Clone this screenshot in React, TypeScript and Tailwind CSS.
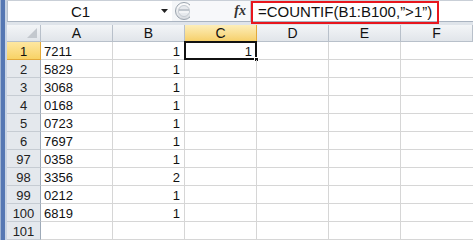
import React from "react";

const rows: [string, string, string][] = [
  ["1", "7211", "1"],
  ["2", "5829", "1"],
  ["3", "3068", "1"],
  ["4", "0168", "1"],
  ["5", "0723", "1"],
  ["6", "7697", "1"],
  ["97", "0358", "1"],
  ["98", "3356", "2"],
  ["99", "0212", "1"],
  ["100", "6819", "1"],
  ["101", "", ""],
];

const cols = ["A", "B", "C", "D", "E", "F"];

export default function App() {
  return (
    <div className="relative w-[473px] h-[240px] overflow-hidden flex bg-white font-['Liberation_Sans',Arial,sans-serif] text-[#111]">
      {/* left blue strip */}
      <div className="flex h-full">
        <div className="w-[1px] bg-[#9fb3d2]" />
        <div className="w-[4px] bg-[#5577b3]" />
        <div className="w-[2px] bg-[#c9d4e4]" />
      </div>

      <div className="flex flex-col flex-1">
        {/* formula bar */}
        <div className="flex h-[21px] bg-white border-t border-[#c9cfd7]">
          <div className="flex w-[165px] border-l border-[#b9c2cd]">
            <div className="w-[146px] flex items-center justify-center text-[15px] leading-none pt-[1px]">C1</div>
            <div className="w-[19px] flex items-center pl-[8px]">
              <svg width="7" height="4" viewBox="0 0 7 4">
                <polygon points="0,0 7,0 3.5,4" fill="#222" />
              </svg>
            </div>
          </div>
          <div className="w-[18px] flex items-center bg-[#f4f6f8]">
            <svg width="18" height="20" viewBox="0 0 18 20">
              <defs>
                <linearGradient id="sg" x1="0" y1="0" x2="0" y2="1">
                  <stop offset="0" stopColor="#ffffff" />
                  <stop offset="1" stopColor="#d6dadf" />
                </linearGradient>
              </defs>
              <circle cx="12" cy="10" r="8.5" fill="url(#sg)" stroke="#9aa3ad" strokeWidth="1" />
              <circle cx="12" cy="10" r="5.5" fill="#e7eaee" stroke="#c4cad1" strokeWidth="1" />
              <line x1="7" y1="9" x2="17" y2="9" stroke="#9aa3ad" strokeWidth="1" />
              <line x1="7" y1="11" x2="17" y2="11" stroke="#ffffff" strokeWidth="1" />
            </svg>
          </div>
          <div className="w-[60px] flex items-center justify-end pr-[4px] bg-[#f7f8fa]">
            <span className="font-['Liberation_Serif',serif] italic font-bold text-[14px] leading-none text-[#333]">fx</span>
          </div>
          <div className="flex-1 flex items-center pl-[7px] border-l border-[#c2c8d0] text-[15px] leading-none pt-[1px] whitespace-nowrap">
            =COUNTIF(B1:B100,”&gt;1”)
          </div>
        </div>
        <div className="h-[4px] bg-[#dfe4ea] border-t border-[#aab4c1]" />

        {/* header row */}
        <div className="flex h-[17px]">
          <div className="w-[34px] relative bg-gradient-to-b from-[#f3f5f7] to-[#e1e5ea] border-r border-b border-[#b8c0ca]">
            <svg className="absolute right-[3px] bottom-[3px]" width="10" height="10" viewBox="0 0 10 10">
              <polygon points="10,0 10,10 0,10" fill="#c3c8ce" />
            </svg>
          </div>
          {cols.map((c) =>
            c === "C" ? (
              <div
                key={c}
                className="w-[72px] flex items-center justify-center text-[14px] leading-none bg-gradient-to-b from-[#fdeeb8] to-[#f6d06a] border-r border-b border-[#e2a93a]"
              >
                {c}
              </div>
            ) : (
              <div
                key={c}
                className="w-[72px] flex items-center justify-center text-[14px] leading-none bg-gradient-to-b from-[#f3f5f7] to-[#e1e5ea] border-r border-b border-[#b8c0ca]"
              >
                {c}
              </div>
            )
          )}
        </div>

        {/* data rows */}
        {rows.map(([n, a, b], i) => (
          <div key={n} className="flex h-[18px] text-[13px] leading-none">
            {i === 0 ? (
              <div className="w-[34px] flex items-center justify-center pt-[2px] bg-gradient-to-b from-[#fee7a0] to-[#f8d264] border-r border-b border-[#e2a93a]">
                {n}
              </div>
            ) : (
              <div className="w-[34px] flex items-center justify-center pt-[2px] bg-[#e4e8ed] border-r border-[#9eaab8] border-b border-b-[#c6ccd3] text-[#222]">
                {n}
              </div>
            )}
            <div className="w-[72px] flex items-center pl-[3px] pt-[2px] border-r border-b border-[#d6d6d6]">{a}</div>
            <div className="w-[72px] flex items-center justify-end pr-[4px] pt-[2px] border-r border-b border-[#d6d6d6]">{b}</div>
            <div className="w-[72px] relative flex items-center justify-end pr-[4px] pt-[2px] border-r border-b border-[#d6d6d6]">
              {i === 0 ? "1" : ""}
              {i === 0 && (
                <>
                  <div className="absolute left-[-1px] top-[-1px] w-[73px] h-[19px] border-2 border-[#111]" />
                  <div className="absolute right-[-3px] bottom-[-3px] w-[5px] h-[5px] bg-[#111] border border-white" />
                </>
              )}
            </div>
            <div className="w-[72px] border-r border-b border-[#d6d6d6]" />
            <div className="w-[72px] border-r border-b border-[#d6d6d6]" />
            <div className="w-[72px] border-b border-[#d6d6d6]" />
          </div>
        ))}
      </div>

      {/* red annotation box */}
      <div className="absolute left-[251px] top-[1px] w-[188px] h-[23px] border-2 border-[#e8161d]" />
    </div>
  );
}
